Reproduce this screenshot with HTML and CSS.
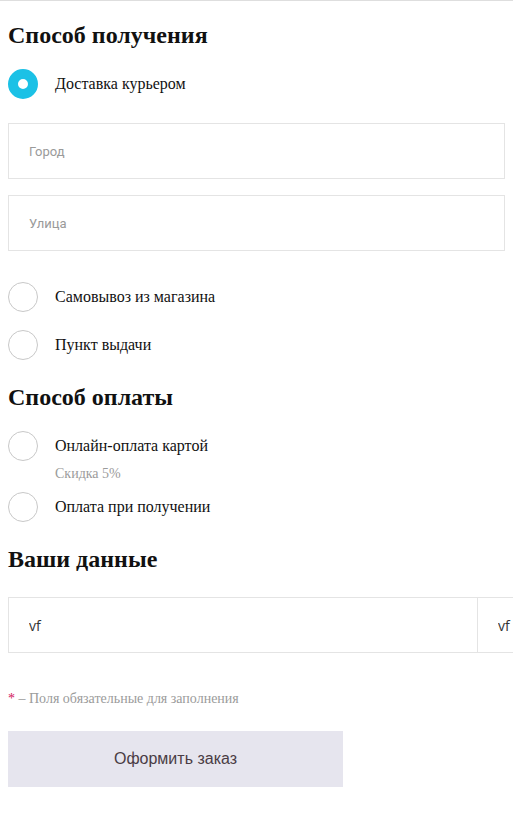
FILE: index.html
```html
<!DOCTYPE html>
<html lang="ru">
<head>
    <meta charset="UTF-8">
    <meta name="viewport" content="width=device-width, initial-scale=1.0">
    <title>Оформление заказа</title>
    <link rel="stylesheet" href="styles.css">
</head>
<body>

    <form class="order">
        <h2 class="order-title">Способ получения</h2>
        <label class="option">
            <input type="radio" name="delivery" checked>
            <span>Доставка курьером</span>
        </label>

        <div class="address">
            <input class="field" type="text" placeholder="Город">
            <input class="field" type="text" placeholder="Улица">
        </div>

        <div class="options">
            <label class="option">
                <input type="radio" name="delivery">
                <span>Самовывоз из магазина</span>
            </label>
            <label class="option">
                <input type="radio" name="delivery">
                <span>Пункт выдачи</span>
            </label>
        </div>

        <h2 class="order-title">Способ оплаты</h2>
        <label class="option">
            <input type="radio" name="payment">
            <span>Онлайн-оплата картой</span>
        </label>
        <div class="discount">Скидка 5%</div>
        <label class="option">
            <input type="radio" name="payment">
            <span>Оплата при получении</span>
        </label>

        <h2 class="order-title">Ваши данные</h2>
        <div class="person">
            <input class="field" type="text" value="vf">
            <input class="field" type="text" value="vf">
        </div>

        <p class="note"><span class="star">*</span> – Поля обязательные для заполнения</p>

        <button type="button" class="submit">Оформить заказ</button>
    </form>

</body>
</html>
```

FILE: styles.css
```css
body {
    margin: 0;
    padding: 0 8px;
    border-top: 1px solid #dedede;
    background-color: white;
    font-family: "Liberation Serif", "Times New Roman", serif;
    color: #111;
}
.order {
    display: flex;
    flex-direction: column;
    align-items: flex-start;
}
.order-title {
    margin: 0;
    font-size: 24px;
    line-height: 28px;
    font-weight: bold;
}
.order-title:first-child {
    margin-top: 20px;
}
.option {
    display: flex;
    align-items: center;
    gap: 17px;
    font-size: 16px;
    cursor: pointer;
}
.option input {
    appearance: none;
    -webkit-appearance: none;
    margin: 0;
    width: 30px;
    height: 30px;
    border: 1px solid #c8c8c8;
    border-radius: 50%;
    background-color: white;
    flex-shrink: 0;
}
.option input:checked {
    border: 10px solid #1bc1e6;
    background-color: white;
}
.order-title + .option {
    margin-top: 20px;
}
.address {
    display: flex;
    flex-direction: column;
    gap: 16px;
    margin-top: 24px;
    width: 497px;
}
.field {
    box-sizing: border-box;
    height: 56px;
    padding: 0 20px;
    border: 1px solid #e4e4e4;
    font-family: Roboto, "Open Sans", sans-serif;
    font-size: 13px;
    color: #333;
    outline: none;
}
.field::placeholder {
    color: #9a9a9a;
}
.options {
    display: flex;
    flex-direction: column;
    gap: 18px;
    margin-top: 31px;
}
.options + .order-title {
    margin-top: 23px;
}
.discount {
    margin: 4px 0 0 47px;
    font-size: 14px;
    line-height: 18px;
    color: #9b9b9b;
}
.discount + .option {
    margin-top: 9px;
}
.discount + .option + .order-title {
    margin-top: 23px;
}
.person {
    display: grid;
    grid-template-columns: 470px 470px;
    align-self: stretch;
    margin: 24px -8px 0 0;
    overflow: hidden;
}
.person .field {
    font-family: "Open Sans", Roboto, sans-serif;
    font-size: 14px;
}
.person .field + .field {
    border-left: none;
}
.note {
    margin: 38px 0 0;
    font-size: 14px;
    color: #9b9b9b;
}
.star {
    color: #d2145a;
}
.submit {
    margin-top: 24px;
    width: 335px;
    height: 56px;
    border: none;
    background-color: #e6e5ee;
    font-family: "Liberation Sans", Arial, sans-serif;
    font-size: 16px;
    color: #4a3c44;
    cursor: pointer;
}
.submit:hover {
    background-color: #dcdbe6;
}
```
